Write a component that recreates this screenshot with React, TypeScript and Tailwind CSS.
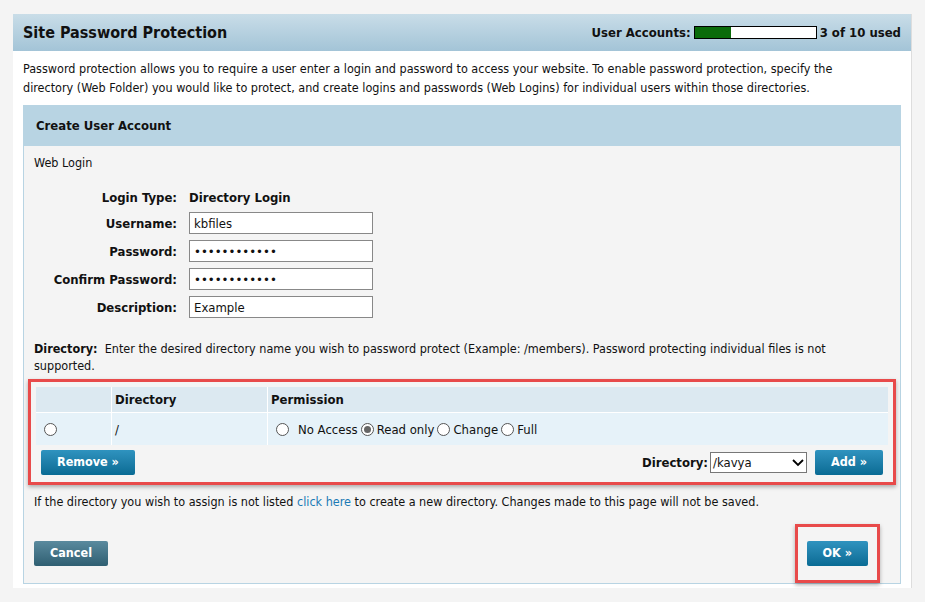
import React from 'react';

const font = { fontFamily: '"DejaVu Sans Condensed", "DejaVu Sans", Tahoma, sans-serif' };

function Radio({ checked }: { checked?: boolean }) {
  return (
    <span className="inline-flex items-center justify-center w-[13px] h-[13px] rounded-full border border-[#555] bg-white align-middle">
      {checked && <span className="w-[7px] h-[7px] rounded-full bg-[#666]" />}
    </span>
  );
}

function Btn({ children, dark }: { children: React.ReactNode; dark?: boolean }) {
  return (
    <span
      className={`inline-flex items-center justify-center h-[25px] px-4 rounded-[2px] text-white font-bold text-[12.5px] ${
        dark ? 'bg-gradient-to-b from-[#5a8a9e] to-[#2f5f72]' : 'bg-gradient-to-b from-[#2f93bf] to-[#086b94]'
      }`}
    >
      {children}
    </span>
  );
}

export default function App() {
  const fields: [string, string][] = [
    ['Username:', 'kbfiles'],
    ['Password:', '••••••••••••'],
    ['Confirm Password:', '••••••••••••'],
    ['Description:', 'Example'],
  ];
  return (
    <div className="w-[925px] h-[602px] bg-[#f4f4f4] pt-[14px] pl-[13px] text-[12.5px] text-[#111]" style={font}>
      <div className="w-[899px] h-[574px] bg-white border-r border-[#ddd]">
        <div className="h-[37px] flex items-center justify-between px-[10px] bg-gradient-to-b from-[#c9dde8] to-[#a3c4d7]">
          <span className="text-[16px] font-bold">Site Password Protection</span>
          <div className="flex items-center gap-[3px] font-bold text-[13px]">
            <span>User Accounts:</span>
            <span className="w-[123px] h-[13px] border border-black bg-white flex">
              <span className="w-[36px] bg-[#0a6b0a]" />
            </span>
            <span>3 of 10 used</span>
          </div>
        </div>
        <p className="px-[10px] pt-[8px] leading-[19px] pr-[30px]">
          Password protection allows you to require a user enter a login and password to access your website. To enable password protection, specify the directory (Web Folder) you would like to protect, and create logins and passwords (Web Logins) for individual users within those directories.
        </p>
        <div className="mx-[10px] mt-[8px] h-[479px] border border-[#b8d4e3] bg-[#f4f4f4] flex flex-col">
          <div className="h-[40px] bg-[#b8d4e3] flex items-center px-[12px] font-bold text-[13px]">Create User Account</div>
          <div className="px-[10px] pt-[8px]">Web Login</div>
          <div className="grid grid-cols-[153px_auto] gap-x-[12px] mt-[16px] items-center w-fit">
            <span className="text-right font-bold text-[13px] h-[18px]">Login Type:</span>
            <span className="font-bold text-[13px] h-[18px]">Directory Login</span>
            {fields.map(([l, v]) => (
              <React.Fragment key={l}>
                <span className="text-right font-bold text-[13px] mt-[6px]">{l}</span>
                <span className="mt-[6px] w-[184px] h-[22px] border border-[#888] bg-white px-[4px] flex items-center text-[13px]">{v}</span>
              </React.Fragment>
            ))}
          </div>
          <p className="px-[10px] mt-[22px] leading-[17px] pr-[40px]">
            <b>Directory:</b>&nbsp; Enter the desired directory name you wish to password protect (Example: /members). Password protecting individual files is not supported.
          </p>
          <div className="mx-[4px] mt-[5px] border-[3px] border-[#e84a4a] shadow-[0_2px_4px_rgba(0,0,0,0.3)] p-[5px] pb-[7px]">
            <div className="grid grid-cols-[75px_155px_1fr] bg-white gap-px text-[13px]">
              <div className="bg-[#dce9f1] h-[25px]" />
              <div className="bg-[#dce9f1] h-[25px] flex items-center px-[3px] font-bold">Directory</div>
              <div className="bg-[#dce9f1] h-[25px] flex items-center px-[3px] font-bold">Permission</div>
              <div className="bg-[#e6f2f9] h-[32px] flex items-center pl-[8px]"><Radio /></div>
              <div className="bg-[#e6f2f9] h-[32px] flex items-center px-[3px]">/</div>
              <div className="bg-[#e6f2f9] h-[32px] flex items-center px-[8px] gap-[3px]">
                <Radio /><span className="ml-[6px]">No Access</span><Radio checked /><span>Read only</span><Radio /><span>Change</span><Radio /><span>Full</span>
              </div>
            </div>
            <div className="flex items-center justify-between px-[5px] mt-[5px]">
              <Btn>Remove »</Btn>
              <div className="flex items-center gap-[2px] font-bold text-[13px]">
                Directory:
                <span className="w-[97px] h-[21px] border border-[#777] bg-white flex items-center justify-between px-[2px] font-normal">
                  /kavya
                  <svg width="12" height="8" viewBox="0 0 12 8"><path d="M1 1l5 5 5-5" stroke="#000" strokeWidth="1.8" fill="none" /></svg>
                </span>
                <span className="ml-[6px]"><Btn>Add »</Btn></span>
              </div>
            </div>
          </div>
          <p className="px-[10px] mt-[8px]">
            If the directory you wish to assign is not listed <span className="text-[#1a7ab5]">click here</span> to create a new directory. Changes made to this page will not be saved.
          </p>
          <div className="flex items-center justify-between pl-[10px] pr-[20px] mt-[12px]">
            <Btn dark>Cancel</Btn>
            <div className="border-[3px] border-[#e84a4a] shadow-[0_2px_4px_rgba(0,0,0,0.3)] px-[9px] py-[14px]">
              <Btn>OK »</Btn>
            </div>
          </div>
        </div>
      </div>
    </div>
  );
}
